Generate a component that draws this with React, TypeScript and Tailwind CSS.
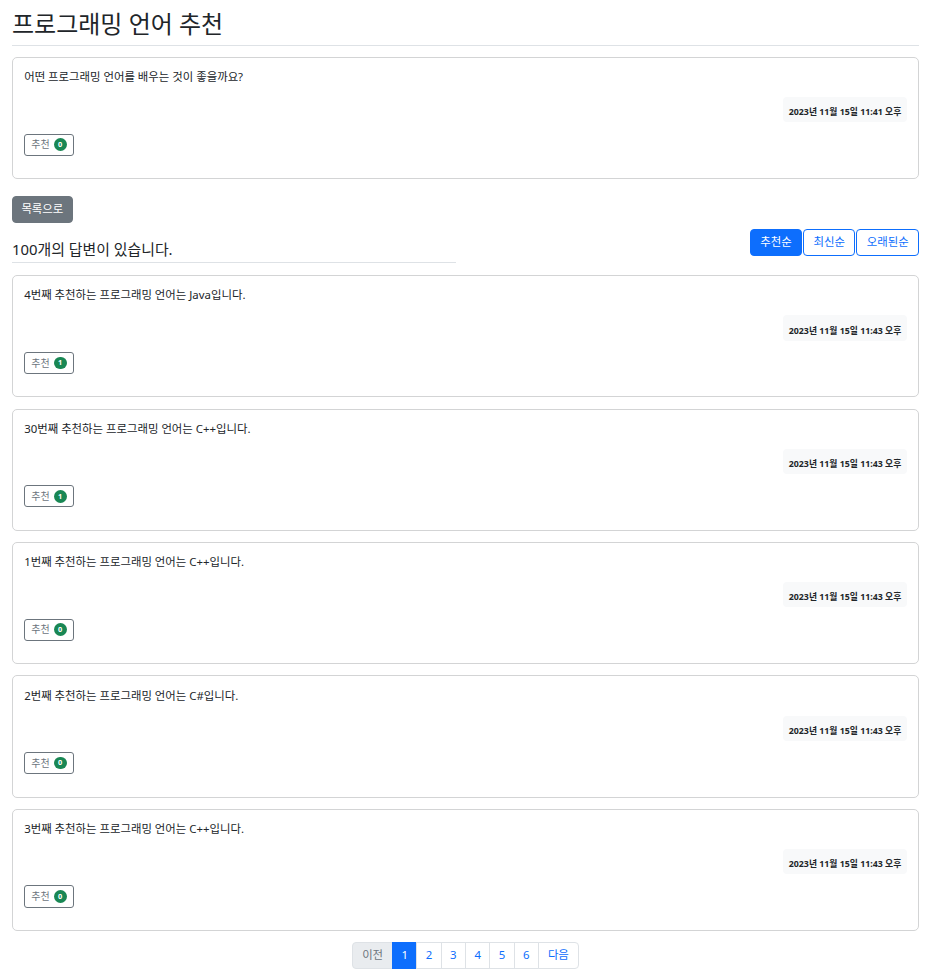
import React from "react";

const answers = [
  { text: "4번째 추천하는 프로그래밍 언어는 Java입니다.", votes: 1 },
  { text: "30번째 추천하는 프로그래밍 언어는 C++입니다.", votes: 1 },
  { text: "1번째 추천하는 프로그래밍 언어는 C++입니다.", votes: 0 },
  { text: "2번째 추천하는 프로그래밍 언어는 C#입니다.", votes: 0 },
  { text: "3번째 추천하는 프로그래밍 언어는 C++입니다.", votes: 0 },
];

function Card({ text, date, votes }: { text: string; date: string; votes: number }) {
  return (
    <div className="border border-[#d3d4d5] rounded-[5px] bg-white p-[11.2px]">
      <div className="text-[11.4px] leading-[16.8px]">{text}</div>
      <div className="flex justify-end mt-[11.2px]">
        <div className="bg-[#f8f9fa] rounded-[4px] px-[5.6px] pt-[11.2px] pb-[5.6px] text-[8.8px] leading-[8.4px] font-bold text-[#212529]">
          {date}
        </div>
      </div>
      <div className="mt-[11.2px] mb-[11.2px] flex">
        <button className="border border-[#6c757d] rounded-[3px] text-[#6c757d] text-[10px] leading-[14.7px] px-[6px] py-[2.8px] flex items-center gap-[4px] bg-white">
          <span>추천</span>
          <span className="bg-[#198754] text-white rounded-full font-bold text-[7.4px] leading-[7.4px] px-[4.4px] py-[2.6px]">
            {votes}
          </span>
        </button>
      </div>
    </div>
  );
}

export default function App() {
  return (
    <div
      className="pl-[12px] pr-[8px] bg-white text-[#212529] min-h-[975px]"
      style={{ fontFamily: '"Noto Sans", "Noto Sans CJK KR", sans-serif' }}
    >
      <h2 className="text-[24px] leading-[27px] pt-[10px] pb-[8px] border-b border-[#dee2e6] font-normal">
        프로그래밍 언어 추천
      </h2>
      <div className="mt-[11px]">
        <Card text="어떤 프로그래밍 언어를 배우는 것이 좋을까요?" date="2023년 11월 15일 11:41 오후" votes={0} />
      </div>
      <div className="mt-[16px]">
        <button className="bg-[#6c757d] text-white text-[11.4px] leading-[16.8px] px-[8.4px] py-[4.2px] rounded-[4px] border border-[#6c757d]">
          목록으로
        </button>
      </div>
      <div className="mt-[6px] flex justify-between items-start">
        <div className="w-[444px] border-b border-[#dee2e6] text-[14.9px] leading-[18.5px] pt-[11px] pb-[3.5px]">
          100개의 답변이 있습니다.
        </div>
        <div className="flex gap-[1px]">
          <button className="bg-[#0d6efd] border border-[#0d6efd] text-white text-[11.4px] leading-[16.8px] px-[9.4px] py-[4.2px] rounded-[4px]">
            추천순
          </button>
          <button className="bg-white border border-[#0d6efd] text-[#0d6efd] text-[11.4px] leading-[16.8px] px-[9.4px] py-[4.2px] rounded-[4px]">
            최신순
          </button>
          <button className="bg-white border border-[#0d6efd] text-[#0d6efd] text-[11.4px] leading-[16.8px] px-[9.4px] py-[4.2px] rounded-[4px]">
            오래된순
          </button>
        </div>
      </div>
      <div className="mt-[12px] flex flex-col gap-[11.2px]">
        {answers.map((a, i) => (
          <Card key={i} text={a.text} date="2023년 11월 15일 11:43 오후" votes={a.votes} />
        ))}
      </div>
      <div className="mt-[11px] flex justify-center">
        <div className="flex text-[11.4px] leading-[16.8px]">
          <span className="px-[9px] py-[4.2px] border border-[#dee2e6] bg-[#e9ecef] text-[#6c757d] rounded-l-[4px]">
            이전
          </span>
          <span className="px-[8.4px] py-[4.2px] border border-[#0d6efd] bg-[#0d6efd] text-white -ml-px">1</span>
          {["2", "3", "4", "5", "6"].map((p) => (
            <span key={p} className="px-[8.4px] py-[4.2px] border border-[#dee2e6] bg-white text-[#0d6efd] -ml-px">
              {p}
            </span>
          ))}
          <span className="px-[9px] py-[4.2px] border border-[#dee2e6] bg-white text-[#0d6efd] -ml-px rounded-r-[4px]">
            다음
          </span>
        </div>
      </div>
    </div>
  );
}
